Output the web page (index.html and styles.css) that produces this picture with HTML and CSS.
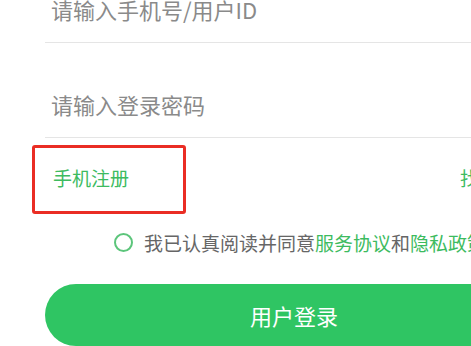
FILE: index.html
```html
<!DOCTYPE html>
<html lang="zh">
<head>
<meta charset="utf-8">
<link rel="stylesheet" href="styles.css">
</head>
<body>
<div class="login">
  <div class="field"><input class="input" type="text" placeholder="请输入手机号/用户ID"></div>
  <div class="field"><input class="input" type="password" placeholder="请输入登录密码"></div>
  <div class="links">
    <a class="link link-marked">手机注册</a>
    <a class="link">找回密码</a>
  </div>
  <div class="agree">
    <span class="radio"></span>
    <span class="agree-text">我已认真阅读并同意<a class="green">服务协议</a>和<a class="green">隐私政策</a></span>
  </div>
  <button class="submit">用户登录</button>
</div>
</body>
</html>
```
FILE: styles.css
```css
html, body {
  margin: 0;
  padding: 0;
  background: #ffffff;
  overflow: hidden;
  width: 471px;
  height: 346px;
}
body {
  font-family: "Noto Sans CJK SC", "Noto Sans", sans-serif;
}
.login {
  width: 498px;
  margin-left: 45px;
  margin-top: -52px;
  display: flex;
  flex-direction: column;
}
.field {
  border-bottom: 1px solid #e5e5e5;
  display: flex;
  align-items: flex-end;
  padding-bottom: 18px;
  height: 76px;
}
.input {
  border: none;
  outline: none;
  padding: 0 0 0 6px;
  margin: 0;
  width: 100%;
  height: 30px;
  line-height: 30px;
  font-family: inherit;
  font-size: 22px;
  color: #333;
  background: transparent;
}
.input::placeholder {
  color: #8a8a8a;
}
.links {
  display: flex;
  justify-content: space-between;
  padding: 0 7px 0 8px;
  height: 80px;
  line-height: 80px;
  font-size: 19px;
}
.link {
  color: #3dbb5f;
  position: relative;
}
.link-marked::after {
  content: "";
  position: absolute;
  left: -21px;
  top: 7px;
  width: 148px;
  height: 63px;
  border: 3px solid #ea2d24;
  border-radius: 3px;
}
.agree {
  display: flex;
  align-items: center;
  justify-content: center;
  padding-left: 12px;
  gap: 11px;
  height: 48px;
  margin-bottom: 18px;
  font-size: 19px;
  color: #666;
}
.radio {
  width: 15px;
  height: 15px;
  border: 2px solid #5cc57b;
  border-radius: 50%;
  flex: none;
  margin-top: 1px;
}
.agree-text {
  white-space: nowrap;
}
.green {
  color: #3dbb5f;
}
.submit {
  height: 62px;
  border: none;
  border-radius: 31px;
  background: #2fc563;
  color: #ffffff;
  font-family: inherit;
  font-size: 22px;
  padding: 0;
}
```
